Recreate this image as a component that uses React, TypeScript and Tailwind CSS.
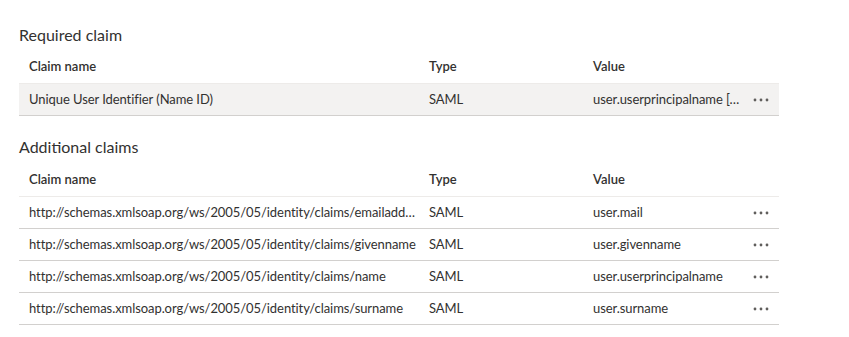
const required = [
  { name: 'Unique User Identifier (Name ID)', type: 'SAML', value: 'user.userprincipalname [nameid-format:emailAddress]' },
];

const additional = [
  { name: 'http://schemas.xmlsoap.org/ws/2005/05/identity/claims/emailaddress', type: 'SAML', value: 'user.mail' },
  { name: 'http://schemas.xmlsoap.org/ws/2005/05/identity/claims/givenname', type: 'SAML', value: 'user.givenname' },
  { name: 'http://schemas.xmlsoap.org/ws/2005/05/identity/claims/name', type: 'SAML', value: 'user.userprincipalname' },
  { name: 'http://schemas.xmlsoap.org/ws/2005/05/identity/claims/surname', type: 'SAML', value: 'user.surname' },
];

const Dots = () => (
  <svg width="16" height="4" viewBox="0 0 16 4" className="text-[#605e5c]">
    <circle cx="2" cy="2" r="1.4" fill="currentColor" />
    <circle cx="8" cy="2" r="1.4" fill="currentColor" />
    <circle cx="14" cy="2" r="1.4" fill="currentColor" />
  </svg>
);

const ClaimTable = ({ rows, shaded }: { rows: typeof required; shaded?: boolean }) => (
  <div className="w-[760px]">
    <div className="flex h-[33px] items-center border-b border-[#edebe9] font-semibold">
      <div className="w-[400px] pl-[10px]">Claim name</div>
      <div className="w-[164px] pl-[10px]">Type</div>
      <div className="flex-1 pl-[10px]">Value</div>
    </div>
    {rows.map((r) => (
      <div
        key={r.name}
        className={`flex h-[32px] items-center border-b border-[#d2d0ce] tracking-[-0.07px] ${shaded ? 'bg-[#f3f2f1]' : ''}`}
      >
        <div className="w-[400px] truncate pl-[10px]">{r.name}</div>
        <div className="w-[164px] pl-[10px]">{r.type}</div>
        <div className="w-[160px] truncate pl-[10px]">{r.value}</div>
        <div className="flex flex-1 items-center pl-[10px]">
          <Dots />
        </div>
      </div>
    ))}
  </div>
);

export default function App() {
  return (
    <div
      className="h-[337px] w-[849px] bg-white pl-[19px] pt-[24px] text-[13px] text-[#323130]"
      style={{ fontFamily: 'Lato, "Liberation Sans", sans-serif' }}
    >
      <h2 className="mb-[5px] text-[16px] leading-[22px]">Required claim</h2>
      <ClaimTable rows={required} shaded />
      <h2 className="mb-[6px] mt-[20px] text-[16px] leading-[22px]">Additional claims</h2>
      <ClaimTable rows={additional} />
    </div>
  );
}
